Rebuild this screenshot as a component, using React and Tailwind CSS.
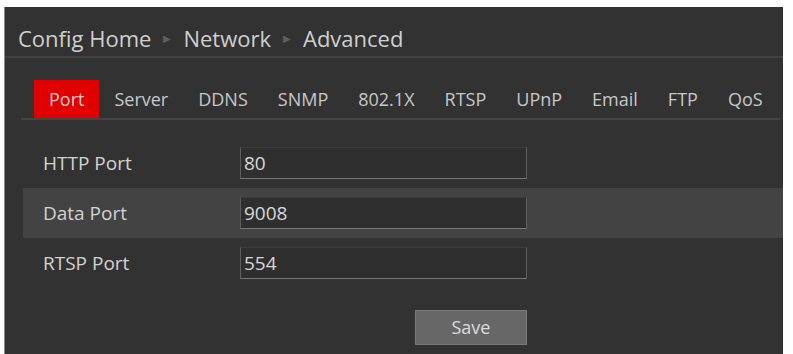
import { useState } from 'react'

const TABS = ['Port', 'Server', 'DDNS', 'SNMP', '802.1X', 'RTSP', 'UPnP', 'Email', 'FTP', 'QoS']

const FIELDS = [
  { label: 'HTTP Port', value: '80' },
  { label: 'Data Port', value: '9008' },
  { label: 'RTSP Port', value: '554' },
]

function Crumb() {
  return <span className="mx-[12px] text-[10px] text-[#5e5e5e]">▶</span>
}

export default function App() {
  const [active, setActive] = useState('Port')
  const [values, setValues] = useState(FIELDS.map((f) => f.value))

  return (
    <div
      className="h-[354px] w-[793px] bg-white pl-[4px] pr-[10px] pt-[7px]"
      style={{ fontFamily: '"Open Sans", "Noto Sans", sans-serif' }}
    >
      <div className="h-full border-l border-[#8a8a8a] bg-[#323232]">
        {/* breadcrumb */}
        <div className="flex h-[51px] items-center border-b-2 border-[#424242] pl-[13px] pt-[14px] text-[22px] text-[#cfcfcf]">
          <span>Config Home</span>
          <Crumb />
          <span>Network</span>
          <Crumb />
          <span>Advanced</span>
        </div>

        {/* tabs */}
        <div className="ml-[16px] mr-[3px] mt-[22px] flex h-[40px] border-b-2 border-[#444] pl-[13px]">
          {TABS.map((t) => (
            <button
              key={t}
              onClick={() => setActive(t)}
              className={
                'flex h-[38px] items-center px-[15px] text-[18px] ' +
                (active === t ? 'bg-[#e00000] text-[#f0c8c8]' : 'text-[#c8c8c8]')
              }
            >
              {t}
            </button>
          ))}
        </div>

        {/* fields */}
        <div className="mt-[18px]">
          {FIELDS.map((f, i) => (
            <div
              key={f.label}
              className={
                'ml-[18px] flex h-[50px] items-center ' + (i === 1 ? 'bg-[#434343]' : '')
              }
            >
              <span className="w-[217px] pl-[20px] text-[19px] text-[#d2d2d2]">{f.label}</span>
              <input
                value={values[i]}
                onChange={(e) => setValues((prev) => prev.map((v, j) => (j === i ? e.target.value : v)))}
                className="h-[32px] w-[287px] border border-t-[#3c3c3c] border-b-[#777] border-x-[#5e5e5e] bg-[#2f2f2f] px-[3px] text-[19px] text-[#d8d8d8] outline-none"
              />
            </div>
          ))}
        </div>

        <div className="mt-[22px] flex pl-[410px]">
          <button className="h-[35px] w-[112px] border border-[#7a7a7a] bg-[#676767] text-[18px] text-[#dcdcdc]">
            Save
          </button>
        </div>
      </div>
    </div>
  )
}
